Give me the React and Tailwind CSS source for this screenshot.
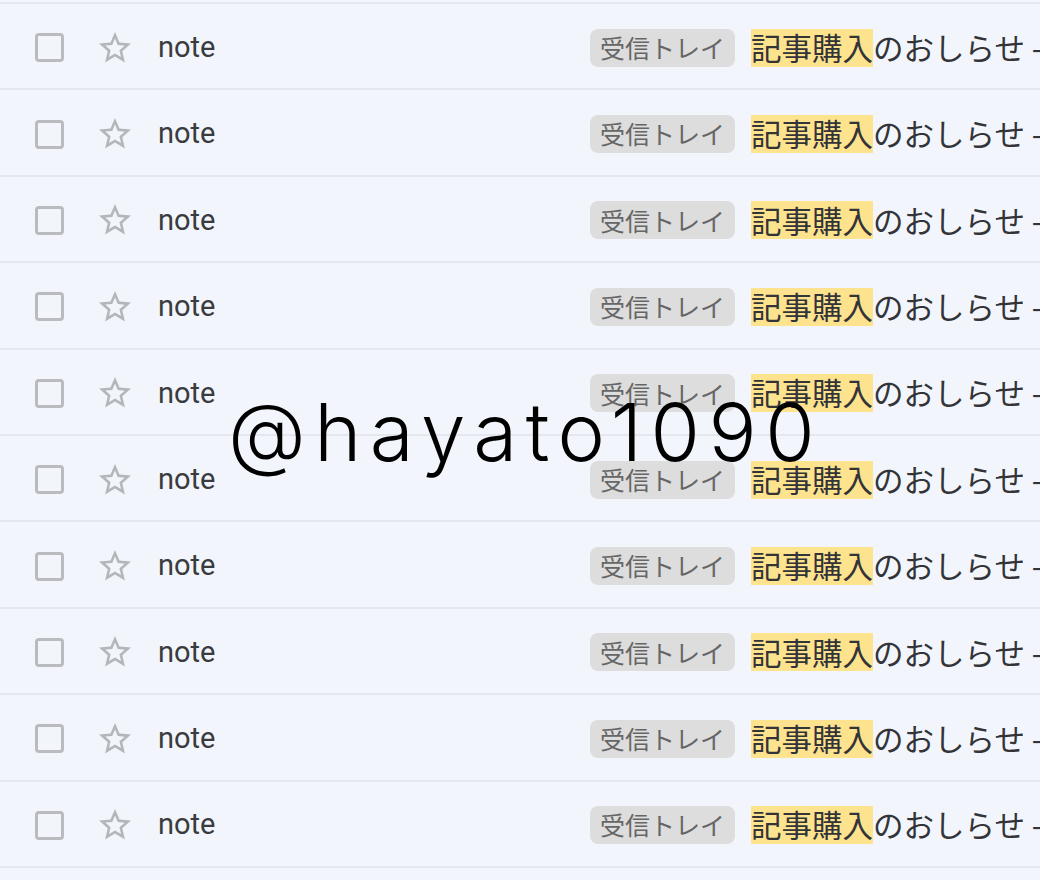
import React from 'react';

const rows = Array.from({ length: 10 }, (_, i) => i);

const StarBorder = () => (
  <svg width="32" height="32" viewBox="2 2 20 20" fill="#b4b6b9">
    <path d="M22 9.24l-7.19-.62L12 2 9.19 8.63 2 9.24l5.46 4.73L5.82 21 12 17.27 18.18 21l-1.63-7.03L22 9.24zM12 15.4l-3.76 2.27 1-4.28-3.32-2.88 4.38-.38L12 6.1l1.71 4.04 4.38.38-3.32 2.88 1 4.28L12 15.4z" />
  </svg>
);

const MailRow = () => (
  <div className="flex items-center h-[86.4px] pt-[3px] border-t-2 border-[#e4e8ee] pl-[35px] whitespace-nowrap overflow-hidden">
    {/* checkbox */}
    <span className="w-[29px] h-[29px] shrink-0 rounded-[4px] border-[3px] border-[#b9bbbe]" />
    <span className="ml-[35px] shrink-0 flex items-center">
      <StarBorder />
    </span>
    <span className="ml-[27px] w-[432px] shrink-0 text-[29px] text-[#3a3b3e] font-['Roboto',_'Liberation_Sans',_sans-serif]">
      note
    </span>
    <span className="shrink-0 h-[38px] flex items-center px-[10px] rounded-[8px] bg-[#dddddd] text-[25px] text-[#666666] font-['Noto_Sans_CJK_JP',_sans-serif]">
      受信トレイ
    </span>
    <span className="ml-[16px] shrink-0 flex items-center text-[30.5px] text-[#333437] font-['Noto_Sans_CJK_JP',_sans-serif]">
      <span className="h-[38px] flex items-center bg-[#fee38f]">記事購入</span>
      <span>のおしらせ - 記事が購入されました</span>
    </span>
  </div>
);

export default function App() {
  return (
    <div className="relative w-[1040px] h-[880px] overflow-hidden bg-[#f2f6fc]">
      <div className="pt-[2px]">
        {rows.map((r) => (
          <MailRow key={r} />
        ))}
        <div className="border-t-2 border-[#e4e8ee]" />
      </div>

      {/* watermark */}
      <div className="absolute left-[228px] top-[392px] text-[80px] leading-none font-light tracking-[8.5px] text-black font-['Inter',_'DejaVu_Sans',_sans-serif]">
        @hayato1090
      </div>
    </div>
  );
}
